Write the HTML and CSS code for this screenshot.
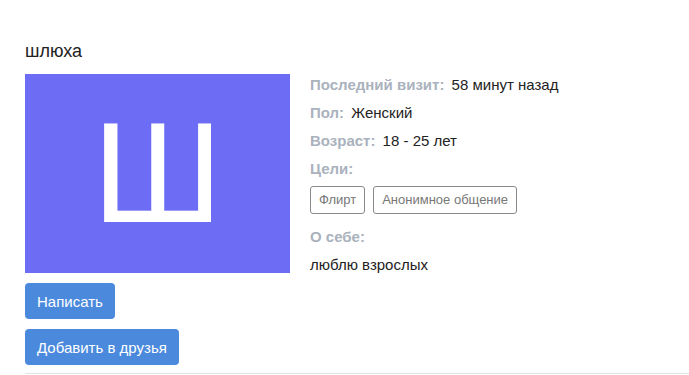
FILE: index.html
```html
<!DOCTYPE html>
<html lang="ru">
<head>
  <meta charset="UTF-8" />
  <meta name="viewport" content="width=device-width, initial-scale=1.0" />
  <title>шлюха</title>
  <link rel="stylesheet" href="styles.css">
</head>
<body>
  <div class="profile">
    <h2 class="profile-name">шлюха</h2>

    <div class="profile-main">
      <div class="avatar">Ш</div>

      <div class="info">
        <div class="info-row"><span class="label">Последний визит:</span> 58 минут назад</div>
        <div class="info-row"><span class="label">Пол:</span> Женский</div>
        <div class="info-row"><span class="label">Возраст:</span> 18 - 25 лет</div>
        <div class="info-row"><span class="label">Цели:</span></div>
        <div class="tags">
          <span class="tag">Флирт</span>
          <span class="tag">Анонимное общение</span>
        </div>
        <div class="info-row about-title"><span class="label">О себе:</span></div>
        <div class="info-row">люблю взрослых</div>
      </div>
    </div>

    <div class="actions">
      <button class="btn">Написать</button>
      <button class="btn">Добавить в друзья</button>
    </div>

    <hr class="divider" />
  </div>
</body>
</html>
```

FILE: styles.css
```css
body {
  margin: 0;
  padding: 0;
  background-color: #fff;
  font-family: 'Liberation Sans', Arial, sans-serif;
  color: #222;
}
.profile {
  padding: 39px 0 0 25px;
}
.profile-name {
  margin: 0 0 11px;
  font-size: 18px;
  line-height: 24px;
  font-weight: normal;
  color: #222;
}
.profile-main {
  display: flex;
  align-items: flex-start;
  gap: 20px;
}
.avatar {
  width: 265px;
  height: 199px;
  background-color: #6c6cf5;
  color: #fff;
  font-size: 142px;
  display: flex;
  align-items: center;
  justify-content: center;
  line-height: 1;
  padding-bottom: 2px;
  box-sizing: border-box;
}
.info {
  font-size: 15px;
}
.info-row {
  line-height: 22px;
  margin-bottom: 6px;
}
.info-row:last-child {
  margin-bottom: 0;
}
.label {
  font-weight: bold;
  color: #aab2bd;
  margin-right: 3px;
}
.tags {
  display: flex;
  gap: 8px;
}
.tag {
  border: 1px solid #8a8a8a;
  border-radius: 3px;
  padding: 4px 8px;
  font-size: 13px;
  line-height: 18px;
  color: #777;
}
.about-title {
  margin-top: 12px;
}
.actions {
  display: flex;
  flex-direction: column;
  align-items: flex-start;
  gap: 10px;
  margin-top: 7px;
}
.btn {
  background-color: #4a89dc;
  border: none;
  border-radius: 4px;
  height: 36px;
  padding: 0 12px;
  font-family: inherit;
  font-size: 15px;
  color: #fff;
  cursor: pointer;
}
.divider {
  margin: 8px 0 0;
  border: none;
  border-top: 1px solid #e3e3e8;
}
```
